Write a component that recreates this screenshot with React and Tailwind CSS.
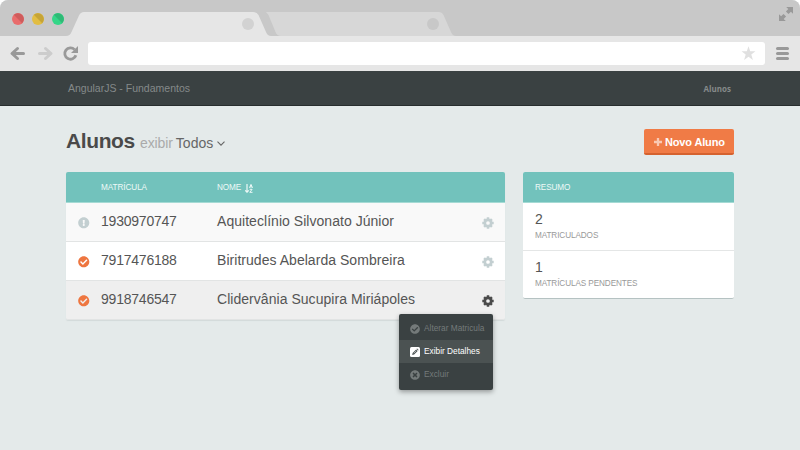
import React from "react";
import {
  FaCheckCircle,
  FaExclamationCircle,
  FaTimesCircle,
} from "react-icons/fa";

const students = [
  { id: "1930970747", name: "Aquiteclínio Silvonato Júnior", pending: true, bg: "bg-[#f9f9f9]" },
  { id: "7917476188", name: "Biritrudes Abelarda Sombreira", bg: "bg-white" },
  { id: "9918746547", name: "Clidervânia Sucupira Miriápoles", open: true, bg: "bg-[#efefef]" },
];

function TabStrip() {
  return (
    <svg className="block h-9 w-[800px]" viewBox="0 0 800 36">
      <rect width="800" height="36" fill="#c8c8c8" />
      <path d="M266 12H438.500Q442 12 443.500 15L451 32Q452.500 36 456 36H281Q277 36 275.500 32L268.500 15Z" fill="#d7d7d7" />
      <path d="M66 36Q70 36 71.500 32L79 15.500Q80.500 12 84 12H253Q257 12 258.500 15L266 32Q267.500 36 271 36Z" fill="#e6e6e6" />
      <circle cx="248" cy="24" r="6" fill="#d2d2d2" />
      <circle cx="433" cy="24" r="6" fill="#c8c8c8" />
      <circle cx="18" cy="19" r="6" fill="#e96c6c" />
      <path d="M13.760 14.760A6 6 0 0 1 22.240 23.240Z" fill="#cf5c5c" />
      <circle cx="38" cy="19" r="6" fill="#e2bd42" />
      <path d="M33.760 14.760A6 6 0 0 1 42.240 23.240Z" fill="#c6a436" />
      <circle cx="58" cy="19" r="6" fill="#35d688" />
      <path d="M53.760 14.760A6 6 0 0 1 62.240 23.240Z" fill="#2fba76" />
      <g fill="#999">
        <path d="M786.200 7H793V13.800L790.900 11.700L788.500 14.100L785.900 11.500L788.300 9.100Z" />
        <path d="M779 14.200L781.100 16.300L783.500 13.900L786.100 16.500L783.700 18.900L785.800 21H779Z" />
      </g>
    </svg>
  );
}

function Toolbar() {
  return (
    <div className="flex h-[35px] items-center bg-[#e6e6e6]">
      <svg className="block h-[35px] w-[88px]" viewBox="0 36 88 35" fill="none">
        <path d="M23.500 53.500H12.500M17.500 48.500L12 53.500L17.500 58.500" stroke="#999" strokeWidth="3" strokeLinecap="round" strokeLinejoin="round" />
        <path d="M39.500 53.500H50.500M45.500 48.500L51 53.500L45.500 58.500" stroke="#ccc" strokeWidth="3" strokeLinecap="round" strokeLinejoin="round" />
        <path d="M74.600 49.600A5.700 5.700 0 1 0 75.900 55.300" stroke="#999" strokeWidth="2.800" />
        <path d="M78 46V53H71Z" fill="#999" />
      </svg>
      <div className="mb-px flex h-[23px] w-[677px] items-center justify-end rounded-[3px] bg-white pr-[9px]">
        <svg className="h-[15px] w-[15px]" viewBox="0 0 15 15" fill="#e0e0e0">
          <path d="M7.500 .3L9.200 5.300H14.500L10.300 8.600L11.900 14L7.500 10.800L3.100 14L4.700 8.600L.5 5.300H5.800Z" />
        </svg>
      </div>
      <div className="ml-[11px] flex w-[13px] flex-col gap-[2px]">
        <span className="h-[3px] rounded-full bg-[#999]" />
        <span className="h-[3px] rounded-full bg-[#999]" />
        <span className="h-[3px] rounded-full bg-[#999]" />
      </div>
    </div>
  );
}

function Gear({ className }) {
  return (
    <svg className={className} viewBox="0 0 12 12" fill="none" stroke="currentColor">
      <circle cx="6" cy="6" r="3.200" strokeWidth="2.700" />
      <path d="M6 .3V2.200M6 9.800V11.700M.3 6H2.200M9.800 6H11.700M2.100 2.100L3.300 3.300M8.700 8.700L9.900 9.900M2.100 9.900L3.300 8.700M8.700 3.300L9.900 2.100" strokeWidth="2.500" />
    </svg>
  );
}

function SortIcon() {
  return (
    <svg className="ml-[4px] h-[9px] w-[8px]" viewBox="0 0 8 9" fill="none" stroke="#eef9f7">
      <path d="M2 0V8M.2 6.300L2 8.200L3.800 6.300" strokeWidth="1.200" />
      <path d="M4.500 3.900L6 .4L7.500 3.900M5 2.900H7M4.700 5.300H7.100L4.800 8.300H7.500" strokeWidth="1" />
    </svg>
  );
}

function PencilSquare() {
  return (
    <svg className="h-[10px] w-[10px]" viewBox="0 0 10 10">
      <rect width="10" height="10" rx="1.500" fill="#fff" />
      <path d="M2.200 7.900L2.600 6L6.100 2.500L7.600 4L4.100 7.500Z" fill="#4b5353" />
      <path d="M3.800 6.200L6.200 3.800" stroke="#fff" strokeWidth=".5" />
      <path d="M6.500 2.100L7.100 1.500L8.600 3L8 3.600Z" fill="#4b5353" />
    </svg>
  );
}

function RowMenu() {
  return (
    <div className="absolute top-[33px] right-[12px] z-10 h-[76px] w-[94px] rounded-[2px] bg-[#3a4142] pt-[3px] text-[8.300px] text-[#747a7a] shadow-[0_2px_5px_rgba(0,0,0,0.35)]">
      <div className="flex h-[23px] items-center pl-[11px]">
        <FaCheckCircle className="mr-[4px] h-[10px] w-[10px]" />
        <span className="whitespace-nowrap">Alterar Matricula</span>
      </div>
      <div className="flex h-[23px] items-center bg-[#4b5252] pl-[11px] text-white">
        <span className="mr-[4px]"><PencilSquare /></span>
        <span className="whitespace-nowrap">Exibir Detalhes</span>
      </div>
      <div className="flex h-[23px] items-center pl-[11px]">
        <FaTimesCircle className="mr-[4px] h-[10px] w-[10px]" />
        <span>Excluir</span>
      </div>
    </div>
  );
}

function StudentRow({ student }) {
  return (
    <div className={`relative flex h-[39px] items-center border-b border-[#e2e4e4] pr-[11px] pb-px pl-[12px] text-[14px] text-[#555] last:rounded-b-[2px] ${student.bg}`}>
      <span className="mt-[3px] w-[23px]">
        {student.pending ? (
          <FaExclamationCircle className="h-[11.500px] w-[11.500px] text-[#c3cfd1]" />
        ) : (
          <FaCheckCircle className="h-[11.500px] w-[11.500px] text-[#ee7640]" />
        )}
      </span>
      <span className="w-[116px] tracking-[-0.220px]">{student.id}</span>
      <span className="flex-1 tracking-[0.040px]">{student.name}</span>
      <Gear className={`mt-[3px] h-[12px] w-[12px] ${student.open ? "text-[#4a4a4a]" : "text-[#c3cfd1]"}`} />
      {student.open && <RowMenu />}
    </div>
  );
}

function SummaryItem({ value, label }) {
  return (
    <div className="h-[48px] border-b border-[#e4e6e6] pt-[7px] pl-[12px] last:rounded-b-[2px] last:border-[#b5c2c2]">
      <div className="text-[14px] leading-[18px] text-[#555]">{value}</div>
      <div className="mt-[2px] text-[8.200px] leading-[12px] tracking-[-0.100px] text-[#999]">{label}</div>
    </div>
  );
}

export default function App() {
  return (
    <div className="h-[450px] w-[800px] overflow-hidden rounded-t-[8px] bg-[#e4eaea] font-['Liberation_Sans',Arial,sans-serif]">
      <TabStrip />
      <Toolbar />
      <nav className="flex h-[35px] items-center justify-between border-b border-[#272d2e] bg-[#3a4142] pr-[69px] pl-[68px] text-[#858a8a]">
        <span className="pt-[2px] text-[10.500px]">AngularJS - Fundamentos</span>
        <span className="pt-px font-['Open_Sans',sans-serif] text-[8px] font-bold">Alunos</span>
      </nav>
      <main className="pr-[66px] pl-[66px]">
        <div className="flex h-[66px] items-start justify-between">
          <h1 className="flex items-baseline pt-[21px] leading-[28px]">
            <span className="w-[74px] text-[21px] font-bold tracking-[-0.400px] text-[#4a4a4a]">Alunos</span>
            <span className="text-[14px] tracking-[-0.100px] text-[#aaa]">exibir</span>
            <span className="ml-[3px] text-[14px] text-[#666]">Todos</span>
            <svg className="mt-[2px] ml-[4px] h-[5px] w-[8px] self-center" viewBox="0 0 8 5" fill="none">
              <path d="M.5 .6L4 4.100L7.500 .6" stroke="#666" strokeWidth="1.100" />
            </svg>
          </h1>
          <button className="mt-[23px] flex h-[26px] w-[90px] items-center rounded-[2px] border-b-2 border-[#d5622f] bg-[#f07b46] pt-px pl-[10px] text-[11px] font-bold text-white">
            <svg className="mr-[3px] h-[8px] w-[8px]" viewBox="0 0 8 8">
              <path d="M4 0V8M0 4H8" stroke="#f9c9b4" strokeWidth="2.300" />
            </svg>
            <span className="pt-px tracking-[-0.150px] whitespace-nowrap">Novo Aluno</span>
          </button>
        </div>
        <div className="flex items-start justify-between">
          <section className="w-[439px] rounded-[2px] shadow-[0_1px_1px_#d2dada]">
            <div className="flex h-[31px] items-center rounded-t-[2px] border-b border-[#a5dad4] bg-[#72c2bc] pt-[2px] pl-[35px] text-[8.200px] text-[#eef9f7]">
              <span className="w-[116px] tracking-[-0.080px]">MATRÍCULA</span>
              <span className="tracking-[-0.080px]">NOME</span>
              <SortIcon />
            </div>
            {students.map((s) => (
              <StudentRow key={s.id} student={s} />
            ))}
          </section>
          <aside className="w-[211px] rounded-[2px] bg-white">
            <div className="flex h-[31px] items-center rounded-t-[2px] border-b border-[#a5dad4] bg-[#72c2bc] pt-[2px] pl-[12px] text-[8.200px] tracking-[-0.100px] text-[#eef9f7]">
              RESUMO
            </div>
            <SummaryItem value="2" label="MATRICULADOS" />
            <SummaryItem value="1" label="MATRÍCULAS PENDENTES" />
          </aside>
        </div>
      </main>
    </div>
  );
}
